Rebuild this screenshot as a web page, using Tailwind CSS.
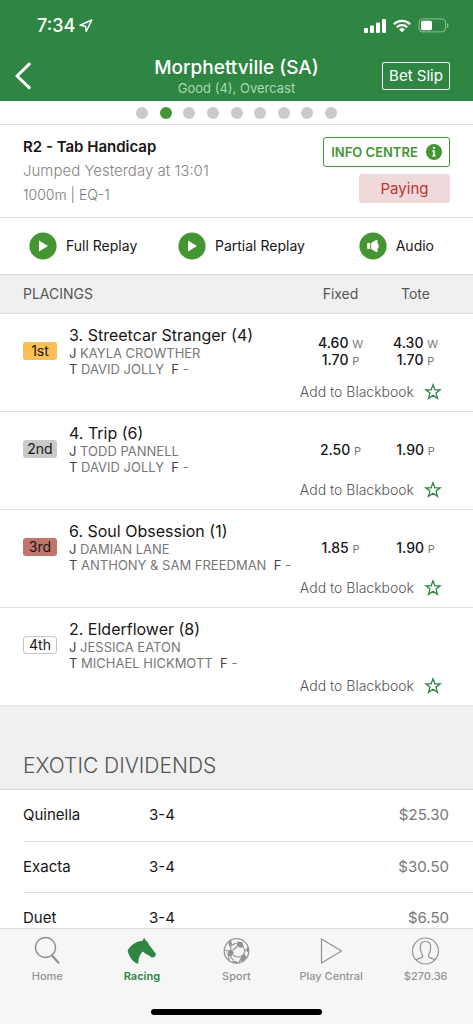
<!DOCTYPE html>
<html lang="en">
<head>
<meta charset="utf-8">
<meta name="viewport" content="width=device-width, initial-scale=1">
<title>Morphettville (SA) - R2</title>
<script src="https://cdn.jsdelivr.net/npm/@tailwindcss/browser@4"></script>
</head>
<body class="flex h-screen flex-col overflow-hidden bg-white font-['Inter','Liberation_Sans',sans-serif] text-[#161616]">
<svg class="hidden" aria-hidden="true">
  <symbol id="star" viewBox="0 0 18 18"><path d="M9 1.800l1.900 5h5.300l-4.200 3.300 1.500 5.300L9 12.300l-4.500 3.100L6 10.100 1.800 6.800h5.300z" fill="none" stroke="#2f8643" stroke-width="1.300" stroke-linejoin="miter"/></symbol>
  <symbol id="play" viewBox="0 0 28 28"><circle cx="14" cy="14" r="13.600" fill="#459632"/><path d="M10 8.500v11l9-5.500z" fill="#fff"/></symbol>
</svg>

<header class="shrink-0 bg-[#2f8643] text-white">
  <div class="flex h-[51px] items-center justify-between pr-6 pl-[37px]">
    <div class="flex items-center gap-1">
      <span class="text-[18px] leading-6 font-medium">7:34</span>
      <svg class="h-[14px] w-[14px]" viewBox="0 0 14 14" fill="none" stroke="#fff" stroke-width="1.500" stroke-linejoin="round"><path d="M12.800 1L1 6.300l5.500.900.700 5.300z"/></svg>
    </div>
    <div class="flex items-center gap-[7px]">
      <svg class="h-[14px] w-[22px]" viewBox="0 0 22 14" fill="#fff"><rect y="9" width="4" height="5" rx="1"/><rect x="6" y="6.600" width="4" height="7.400" rx="1"/><rect x="12" y="3.500" width="4" height="10.500" rx="1"/><rect x="18" width="4" height="14" rx="1"/></svg>
      <svg class="h-[14px] w-[18px]" viewBox="0 0 18 14"><g fill="none" stroke="#fff" stroke-width="2.300"><path d="M.9 5.200a11.500 11.500 0 0 1 16.200 0"/><path d="M3.800 8.300a7.400 7.400 0 0 1 10.400 0"/></g><path d="M9 13.300L6.100 10.400a4.100 4.100 0 0 1 5.800 0z" fill="#fff"/></svg>
      <svg class="h-[15px] w-[31px]" viewBox="0 0 31 15"><rect x="1" y=".9" width="26.500" height="13" rx="3.500" fill="none" stroke="#fff" stroke-opacity=".45"/><rect x="3" y="2.800" width="11" height="9.400" rx="1.600" fill="#fff"/><path d="M29 5v5q1.500-.8 1.500-2.500T29 5z" fill="#fff" fill-opacity=".5"/></svg>
    </div>
  </div>
  <div class="flex h-[50px] items-center pr-[23px] pl-[15px]">
    <div class="w-[76px]"><button class="block" aria-label="Back"><svg class="h-7 w-4" viewBox="0 0 16 28" fill="none" stroke="#fff" stroke-width="3" stroke-linecap="round" stroke-linejoin="round"><path d="M14.200 2.200L2 14l12.200 11.600"/></svg></button></div>
    <div class="flex-1 text-center">
      <h1 class="text-[19px] leading-6 font-medium">Morphettville (SA)</h1>
      <p class="text-[13px] leading-4 text-[#a9d9b4]">Good (4), Overcast</p>
    </div>
    <button class="h-7 w-[68px] rounded-xs border border-white text-[15px] leading-5">Bet Slip</button>
  </div>
</header>

<main class="min-h-0 flex-1 overflow-hidden">
  <nav class="flex h-6 items-center justify-center border-b border-[#e2e2e2]" aria-label="Races">
    <div class="flex w-[201px] justify-between">
      <a href="#r1" aria-label="Race 1" class="size-3 rounded-full bg-[#cacaca]"></a>
      <a href="#r2" aria-label="Race 2" class="size-3 rounded-full bg-[#459632]"></a>
      <a href="#r3" aria-label="Race 3" class="size-3 rounded-full bg-[#cacaca]"></a>
      <a href="#r4" aria-label="Race 4" class="size-3 rounded-full bg-[#cacaca]"></a>
      <a href="#r5" aria-label="Race 5" class="size-3 rounded-full bg-[#cacaca]"></a>
      <a href="#r6" aria-label="Race 6" class="size-3 rounded-full bg-[#cacaca]"></a>
      <a href="#r7" aria-label="Race 7" class="size-3 rounded-full bg-[#cacaca]"></a>
      <a href="#r8" aria-label="Race 8" class="size-3 rounded-full bg-[#cacaca]"></a>
      <a href="#r9" aria-label="Race 9" class="size-3 rounded-full bg-[#cacaca]"></a>
    </div>
  </nav>

  <section class="flex h-[93px] justify-between border-b border-[#e2e2e2] pt-[10px] pr-[23px] pl-[23px]">
    <div>
      <h2 class="text-[15px] leading-6 font-semibold">R2 - Tab Handicap</h2>
      <p class="text-[15px] leading-6 font-light text-[#858585]">Jumped Yesterday at 13:01</p>
      <p class="text-[14px] leading-6 font-light text-[#777]">1000m | EQ-1</p>
    </div>
    <div class="flex flex-col items-end gap-[7px] pt-[2px]">
      <button class="flex h-[30px] w-[127px] items-center justify-center gap-2 rounded-[3px] border border-[#459632] text-[13px] leading-5 font-semibold whitespace-nowrap text-[#459632]">INFO CENTRE
        <svg class="size-4 shrink-0" viewBox="0 0 16 16"><circle cx="8" cy="8" r="8" fill="#459632"/><path d="M7.100 3h1.800v1.800H7.100zM6.200 6.300h2.600v5h1v1.300H6.200v-1.300h1V7.600h-1z" fill="#fff"/></svg></button>
      <span class="flex h-[29px] w-[91px] items-center justify-center rounded-[3px] bg-[#f0d9da] text-[15px] leading-5 text-[#be3431]">Paying</span>
    </div>
  </section>

  <section class="flex h-[57px] items-center border-b border-[#dedede] pr-[39px] pl-[29px] text-[14px] leading-5">
    <div class="w-[149px]"><button class="flex items-center gap-[9px]"><svg class="size-7"><use href="#play"/></svg>Full Replay</button></div>
    <button class="flex items-center gap-[9px]"><svg class="size-7"><use href="#play"/></svg>Partial Replay</button>
    <button class="ml-auto flex items-center gap-[9px]"><svg class="size-7" viewBox="0 0 28 28"><circle cx="14" cy="14" r="13.600" fill="#459632"/><path d="M8.200 11h3v6h-3zM12.200 11l4.800-2.900c1.100-.5 1.600 0 1.600 1v2.300c1.500.8 1.500 4.400 0 5.200v2.300c0 1-.5 1.500-1.600 1L12.200 17z" fill="#fff"/></svg>Audio</button>
  </section>

  <section>
    <header class="flex h-[39px] items-center border-b border-[#dedede] bg-[#f0f0f0] pr-5 pl-[23px] text-[14px] leading-5 text-[#555]">
      <h3 class="flex-1">PLACINGS</h3>
      <span class="w-[75px] text-center">Fixed</span>
      <span class="w-[75px] text-center">Tote</span>
    </header>

    <article class="border-b border-[#e2e2e2] pt-[11px] pb-[9px]">
      <div class="flex items-center pr-5 pl-[23px]">
        <span class="h-[18px] w-[34px] rounded-[3px] bg-[#fac055] text-center text-[14px] leading-[18px]">1st</span>
        <div class="min-w-0 flex-1 pl-3 text-[13px] leading-4 whitespace-nowrap text-[#777]">
          <h4 class="text-[16px] leading-5 text-[#161616]">3. Streetcar Stranger (4)</h4>
          <p><span class="text-[#444]">J</span> KAYLA CROWTHER</p>
          <p><span class="text-[#444]">T</span> DAVID JOLLY&nbsp; <span class="text-[#444]">F</span> -</p>
        </div>
        <div class="w-[75px] text-center text-[14px] leading-[17px] font-medium"><p>4.60 <span class="text-[11px] leading-none font-normal text-[#777]">W</span></p><p>1.70 <span class="text-[11px] leading-none font-normal text-[#777]">P</span></p></div>
        <div class="w-[75px] text-center text-[14px] leading-[17px] font-medium"><p>4.30 <span class="text-[11px] leading-none font-normal text-[#777]">W</span></p><p>1.70 <span class="text-[11px] leading-none font-normal text-[#777]">P</span></p></div>
      </div>
      <button class="mt-[5px] mr-[31px] ml-auto flex items-center gap-[10px] text-[14px] leading-5 font-light text-[#555]">Add to Blackbook<svg class="size-[18px]"><use href="#star"/></svg></button>
    </article>

    <article class="border-b border-[#e2e2e2] pt-[11px] pb-[9px]">
      <div class="flex items-center pr-5 pl-[23px]">
        <span class="h-[18px] w-[34px] rounded-[3px] bg-[#c9c9c9] text-center text-[14px] leading-[18px]">2nd</span>
        <div class="min-w-0 flex-1 pl-3 text-[13px] leading-4 whitespace-nowrap text-[#777]">
          <h4 class="text-[16px] leading-5 text-[#161616]">4. Trip (6)</h4>
          <p><span class="text-[#444]">J</span> TODD PANNELL</p>
          <p><span class="text-[#444]">T</span> DAVID JOLLY&nbsp; <span class="text-[#444]">F</span> -</p>
        </div>
        <div class="w-[75px] text-center text-[14px] leading-[17px] font-medium">2.50 <span class="text-[11px] leading-none font-normal text-[#777]">P</span></div>
        <div class="w-[75px] text-center text-[14px] leading-[17px] font-medium">1.90 <span class="text-[11px] leading-none font-normal text-[#777]">P</span></div>
      </div>
      <button class="mt-[5px] mr-[31px] ml-auto flex items-center gap-[10px] text-[14px] leading-5 font-light text-[#555]">Add to Blackbook<svg class="size-[18px]"><use href="#star"/></svg></button>
    </article>

    <article class="border-b border-[#e2e2e2] pt-[11px] pb-[9px]">
      <div class="flex items-center pr-5 pl-[23px]">
        <span class="h-[18px] w-[34px] rounded-[3px] bg-[#c0766b] text-center text-[14px] leading-[18px]">3rd</span>
        <div class="min-w-0 flex-1 pl-3 text-[13px] leading-4 whitespace-nowrap text-[#777]">
          <h4 class="text-[16px] leading-5 text-[#161616]">6. Soul Obsession (1)</h4>
          <p><span class="text-[#444]">J</span> DAMIAN LANE</p>
          <p><span class="text-[#444]">T</span> ANTHONY &amp; SAM FREEDMAN&nbsp; <span class="text-[#444]">F</span> -</p>
        </div>
        <div class="w-[75px] text-center text-[14px] leading-[17px] font-medium">1.85 <span class="text-[11px] leading-none font-normal text-[#777]">P</span></div>
        <div class="w-[75px] text-center text-[14px] leading-[17px] font-medium">1.90 <span class="text-[11px] leading-none font-normal text-[#777]">P</span></div>
      </div>
      <button class="mt-[5px] mr-[31px] ml-auto flex items-center gap-[10px] text-[14px] leading-5 font-light text-[#555]">Add to Blackbook<svg class="size-[18px]"><use href="#star"/></svg></button>
    </article>

    <article class="border-b border-[#e2e2e2] pt-[11px] pb-[9px]">
      <div class="flex items-center pr-5 pl-[23px]">
        <span class="h-[18px] w-[34px] rounded-[3px] border border-[#c4c4c4] text-center text-[14px] leading-4">4th</span>
        <div class="min-w-0 flex-1 pl-3 text-[13px] leading-4 whitespace-nowrap text-[#777]">
          <h4 class="text-[16px] leading-5 text-[#161616]">2. Elderflower (8)</h4>
          <p><span class="text-[#444]">J</span> JESSICA EATON</p>
          <p><span class="text-[#444]">T</span> MICHAEL HICKMOTT&nbsp; <span class="text-[#444]">F</span> -</p>
        </div>
      </div>
      <button class="mt-[5px] mr-[31px] ml-auto flex items-center gap-[10px] text-[14px] leading-5 font-light text-[#555]">Add to Blackbook<svg class="size-[18px]"><use href="#star"/></svg></button>
    </article>
  </section>

  <section>
    <h3 class="border-b border-[#dedede] bg-[#f0f0f1] pt-[46px] pb-[9px] pl-[23px] text-[21px] leading-7 font-light text-[#555]">EXOTIC DIVIDENDS</h3>
    <table class="ml-[23px] w-[calc(100%-23px)] text-[15px] leading-5">
      <tbody>
        <tr class="h-[51px] border-b border-[#e2e2e2]"><th scope="row" class="w-[126px] text-left font-normal">Quinella</th><td>3-4</td><td class="pr-6 text-right text-[#777]">$25.30</td></tr>
        <tr class="h-[51px] border-b border-[#e2e2e2]"><th scope="row" class="text-left font-normal">Exacta</th><td>3-4</td><td class="pr-6 text-right text-[#777]">$30.50</td></tr>
        <tr class="h-[51px] border-b border-[#e2e2e2]"><th scope="row" class="text-left font-normal">Duet</th><td>3-4</td><td class="pr-6 text-right text-[#777]">$6.50</td></tr>
      </tbody>
    </table>
  </section>
</main>

<footer class="shrink-0 border-t border-[#dcdcdc] bg-[#f6f6f6]">
  <nav class="grid h-[80px] grid-cols-5 pt-[7px] text-[11px] leading-4 font-medium text-[#929292]">
    <a href="#home" class="flex flex-col items-center gap-[3px]"><svg class="size-[29px]" viewBox="0 0 29 29" fill="none" stroke="#929292"><circle cx="12.500" cy="11.500" r="10" stroke-width="1.400"/><path d="M18.800 19.300l7.200 8" stroke-width="2.200"/></svg>Home</a>
    <a href="#racing" class="flex flex-col items-center gap-[3px] font-semibold text-[#2f8643]"><svg class="size-[29px]" viewBox="0 0 29 29" fill="#2f8643"><path d="M17.200 1.700L19 4.800C20.500 5.500 21.300 7 22.300 9.200L28.400 17C29.200 18.500 28.600 20.500 26.800 21.200L24.500 21.500C23 19.300 20.500 18.700 18.500 17.700L16 15.500C13 18 11.500 21.500 11.200 28C6.500 26.500 2.500 22 .6 14.500C3.500 9.500 8.500 5.500 15.500 4.800Z"/></svg>Racing</a>
    <a href="#sport" class="flex flex-col items-center gap-[3px]"><svg class="size-[29px]" viewBox="0 0 29 29" fill="none" stroke="#929292" stroke-width="1.200"><circle cx="14.500" cy="15" r="12.300"/><path d="M10.800 14l4.400-3.500M21 11l2 3.500-1.800 4.500M18 21l-5-.5-2-1.800M18.500 23.500l-2 3.500M6.500 19.500l.5 5M5.500 15l-2.500-1M8.500 13.500L9 9.500M9 9.500l5.500-2.500M23 14.500l3.500-1M8.500 20.500l3 4"/><g fill="#929292" stroke="none"><path d="M5.800 14.500l4-1 2 3-2.300 4-4-1z"/><path d="M15.500 5.500l5 .8 1.200 4.200-3.500 1.500-3.700-2.500z"/><path d="M18.800 19.500l4-1.300 1.700 2.800-2.500 3.800-4 .2z"/><path d="M6.300 6.800l3-2.300.7 4-3 2zM26 10.500l.8 4-1.600 2-1-3.500zM10.500 24.500l4 .8 1.500 2-5-.8z"/></g></svg>Sport</a>
    <a href="#play" class="flex flex-col items-center gap-[3px]"><svg class="size-[29px]" viewBox="0 0 29 29" fill="none" stroke="#929292" stroke-width="1.200" stroke-linejoin="round"><path d="M4.500 3v24l20-12z"/></svg>Play Central</a>
    <a href="#account" class="flex flex-col items-center gap-[3px]"><svg class="size-[29px]" viewBox="0 0 29 29" fill="none" stroke="#929292" stroke-width="1.200"><circle cx="14.500" cy="15" r="13"/><path d="M5 23.800c1.500-1.200 6-1.500 6.500-3.300.3-1.300-.5-2.600-1.200-4-1.100-2.300-1-4.500-.9-6.500.2-3 2-4.500 5.100-4.500s4.900 1.500 5.100 4.500c.1 2 .2 4.200-.9 6.500-.7 1.400-1.500 2.700-1.200 4 .5 1.800 5 2.100 6.500 3.300"/></svg>$270.36</a>
  </nav>
  <div class="flex h-[15px] justify-center"><div class="h-[6px] w-[36%] rounded-full bg-black"></div></div>
</footer>
</body>
</html>
